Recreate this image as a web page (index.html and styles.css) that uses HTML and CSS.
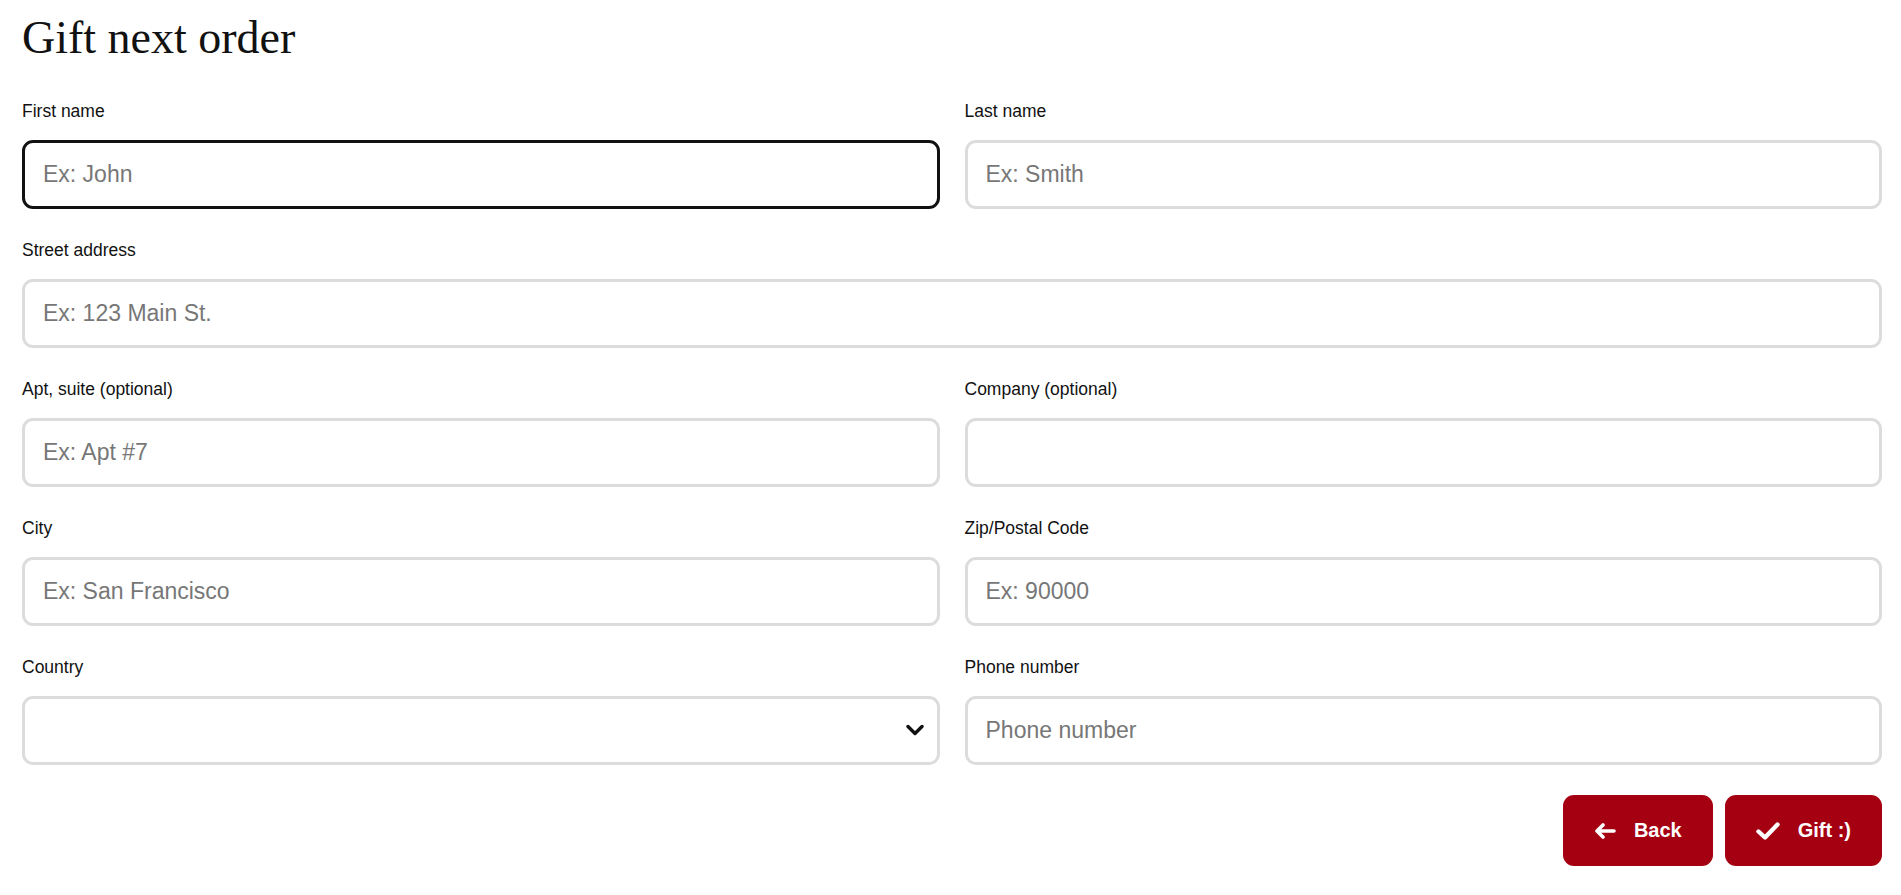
FILE: index.html
```html
<!DOCTYPE html>
<html lang="en">
<head>
    <meta charset="UTF-8">
    <meta name="viewport" content="width=device-width, initial-scale=1.0">
    <title>Gift next order</title>
    <link rel="stylesheet" href="styles.css">
</head>
<body>
    <div class="container">
        <h1>Gift next order</h1>
        <form class="gift-form">
            <div class="field">
                <label for="firstName">First name</label>
                <input type="text" id="firstName" class="is-focused" placeholder="Ex: John">
            </div>
            <div class="field">
                <label for="lastName">Last name</label>
                <input type="text" id="lastName" placeholder="Ex: Smith">
            </div>
            <div class="field field-wide">
                <label for="street">Street address</label>
                <input type="text" id="street" placeholder="Ex: 123 Main St.">
            </div>
            <div class="field">
                <label for="apt">Apt, suite (optional)</label>
                <input type="text" id="apt" placeholder="Ex: Apt #7">
            </div>
            <div class="field">
                <label for="company">Company (optional)</label>
                <input type="text" id="company">
            </div>
            <div class="field">
                <label for="city">City</label>
                <input type="text" id="city" placeholder="Ex: San Francisco">
            </div>
            <div class="field">
                <label for="zip">Zip/Postal Code</label>
                <input type="text" id="zip" placeholder="Ex: 90000">
            </div>
            <div class="field">
                <label for="country">Country</label>
                <div class="select-wrap">
                    <select id="country">
                        <option value=""></option>
                    </select>
                    <svg class="chevron" width="18" height="12" viewBox="0 0 18 12">
                        <path d="M2 2.5 L9 9.5 L16 2.5" fill="none" stroke="#111" stroke-width="3.4" stroke-linecap="round" stroke-linejoin="round"/>
                    </svg>
                </div>
            </div>
            <div class="field">
                <label for="phone">Phone number</label>
                <input type="tel" id="phone" placeholder="Phone number">
            </div>
        </form>
        <div class="actions">
            <button type="button" class="btn">
                <svg width="22" height="16" viewBox="0 0 22 16">
                    <path d="M20 8 H3 M9 2 L3 8 L9 14" fill="none" stroke="#fff" stroke-width="3.6" stroke-linecap="round" stroke-linejoin="round"/>
                </svg>
                Back
            </button>
            <button type="button" class="btn">
                <svg width="24" height="18" viewBox="0 0 24 18">
                    <path d="M2.5 9.5 L9 15.5 L21.5 2.5" fill="none" stroke="#fff" stroke-width="4.4" stroke-linecap="round" stroke-linejoin="round"/>
                </svg>
                Gift :)
            </button>
        </div>
    </div>
</body>
</html>
```

FILE: styles.css
```css
body {
    margin: 0;
    font-family: "Liberation Sans", Arial, sans-serif;
    color: #111;
    background-color: #fff;
}
.container {
    padding: 0 19px 0 22px;
}
h1 {
    margin: 12px 0 0;
    font-family: "Liberation Serif", "Times New Roman", serif;
    font-size: 46px;
    font-weight: normal;
    line-height: 51px;
    color: #111;
}
.gift-form {
    display: grid;
    grid-template-columns: 1fr 1fr;
    column-gap: 25px;
    row-gap: 31px;
    margin-top: 38px;
}
.field-wide {
    grid-column: span 2;
}
.field label {
    display: block;
    margin-bottom: 19px;
    font-size: 17.5px;
    line-height: 20px;
}
.field input, .field select {
    display: block;
    width: 100%;
    height: 69px;
    padding: 0 18px;
    box-sizing: border-box;
    border: 3px solid #dcdcdc;
    border-radius: 11px;
    background-color: #fff;
    font-family: "Liberation Sans", Arial, sans-serif;
    font-size: 23px;
    color: #111;
    outline: none;
}
.field input::placeholder {
    color: #777;
}
.field input.is-focused {
    border-color: #111;
}
.select-wrap {
    position: relative;
}
.select-wrap select {
    appearance: none;
    -webkit-appearance: none;
}
.chevron {
    position: absolute;
    right: 16px;
    top: 28px;
    pointer-events: none;
}
.actions {
    display: flex;
    justify-content: flex-end;
    gap: 12px;
    margin-top: 30px;
}
.btn {
    display: flex;
    align-items: center;
    gap: 18px;
    height: 71px;
    padding: 0 31px;
    border: none;
    border-radius: 11px;
    background-color: #a50011;
    color: #fff;
    font-family: "Liberation Sans", Arial, sans-serif;
    font-size: 20px;
    font-weight: bold;
    cursor: pointer;
}
```
